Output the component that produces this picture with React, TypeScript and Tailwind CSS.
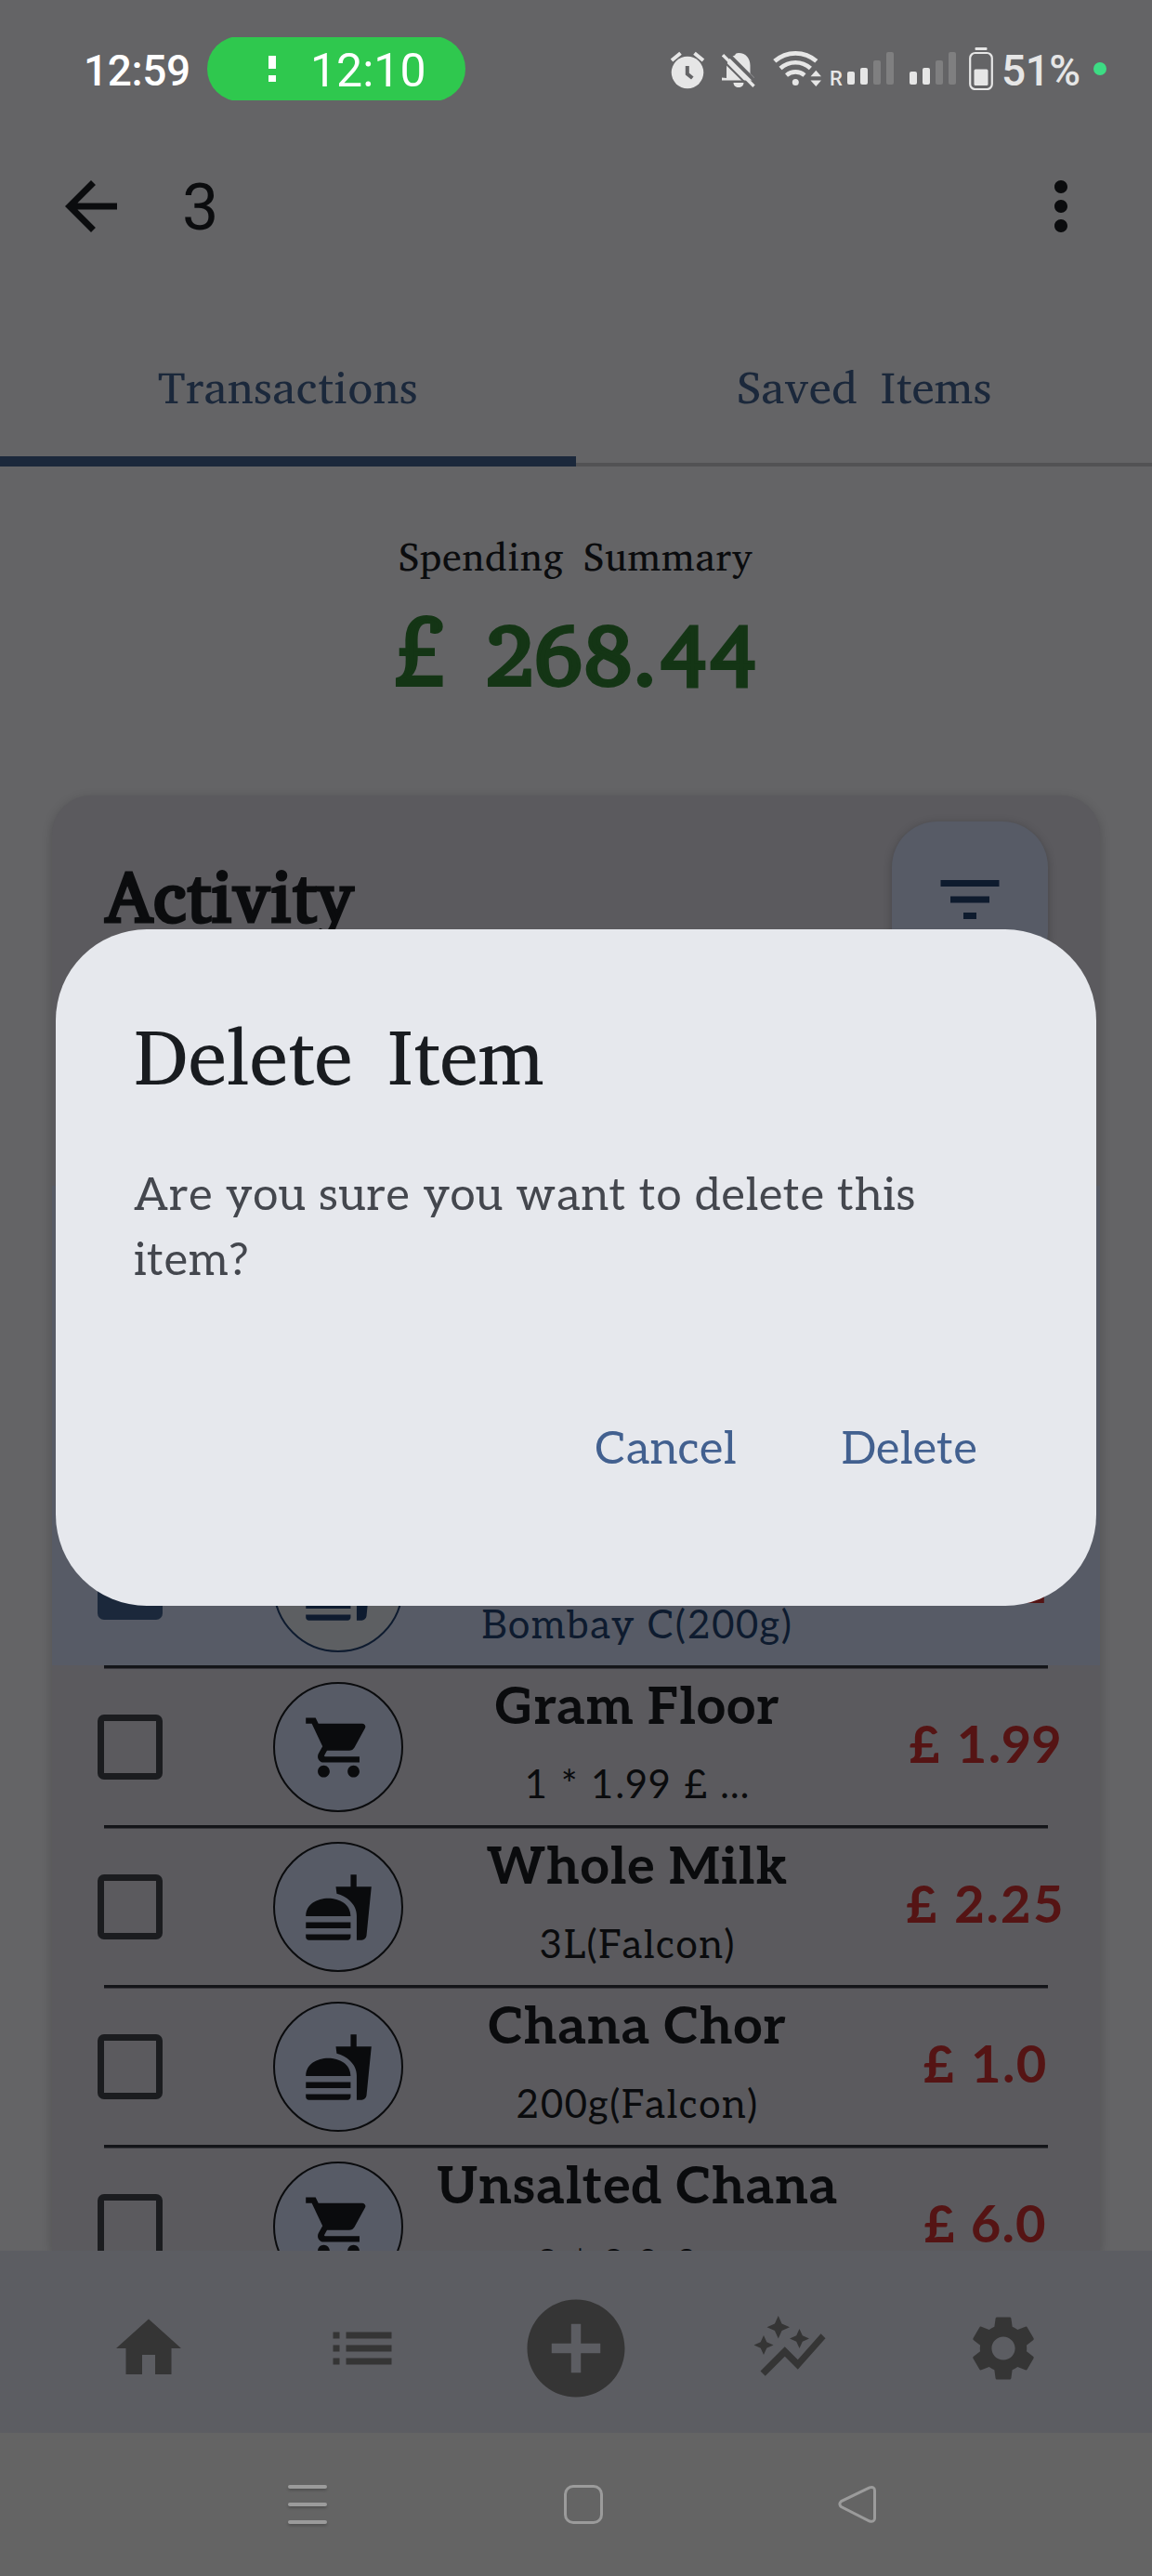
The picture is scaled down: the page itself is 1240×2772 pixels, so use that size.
import type { ReactNode } from 'react';
import {
  MdAddCircle,
  MdArrowBack,
  MdAutoGraph,
  MdFastfood,
  MdFilterList,
  MdHome,
  MdList,
  MdMoreVert,
  MdSettings,
  MdShoppingCart,
} from 'react-icons/md';

const serif = "font-['Charis_SIL','Noto_Serif','DejaVu_Serif',serif]";
const slab = "font-['Aleo','Lato','DejaVu_Serif',serif]";

function AlarmIcon() {
  return (
    <svg className="h-[41px] w-[38px]" viewBox="0 0 38 41" fill="none">
      <circle cx="19" cy="23" r="17.3" fill="#e6e6e6" />
      <path d="M2 10 L11.5 2.2 M36 10 L26.5 2.2" stroke="#e6e6e6" strokeWidth="4" />
      <path d="M18.8 16 v8.5 l5.5 4.5" stroke="#646466" strokeWidth="4" />
    </svg>
  );
}

function BellOffIcon() {
  return (
    <svg className="h-[37px] w-[36px]" viewBox="0 0 36 37">
      <path
        d="M5 27 V17 C5 9 9 4 14 2.600 C14.500 .8 16.200 0 18 0 C26 0 30.500 6 30.500 13.500 V22 L35 26.500 V29.500 H0 V26.500 Z M12.500 32 H23.500 C23.500 35 21 37 18 37 C15 37 12.500 35 12.500 32 Z"
        fill="#e6e6e6"
      />
      <path d="M4 -1.500 L38 32.500" stroke="#646466" strokeWidth="4" />
      <path d="M1 2.200 L34.500 35.700" stroke="#e6e6e6" strokeWidth="3.400" />
      <path d="M-2 5 L31 38" stroke="#646466" strokeWidth="2" />
    </svg>
  );
}

function WifiIcon() {
  return (
    <svg className="h-[40px] w-[53px]" viewBox="0 0 53 40" fill="none" stroke="#e6e6e6">
      <path d="M1.800 12.800 A34 34 0 0 1 46.800 12.800" strokeWidth="4.800" />
      <path d="M8 20.500 A24 24 0 0 1 40.400 20.500" strokeWidth="4.600" />
      <path d="M14.500 28 A15 15 0 0 1 34 28" strokeWidth="4.600" />
      <circle cx="24.300" cy="35.500" r="3.500" fill="#e6e6e6" stroke="none" />
      <path d="M40.500 29.300 L46.300 22.800 L52 29.300 Z M40.500 33.500 H52 L46.300 40 Z" fill="#e6e6e6" stroke="none" />
    </svg>
  );
}

function SignalBars() {
  return (
    <div className="flex h-[35px] items-end gap-[6px]">
      <div className="h-[14px] w-2 rounded-[2px] bg-[#e6e6e6]" />
      <div className="h-[18px] w-2 rounded-[2px] bg-[#e6e6e6]" />
      <div className="h-[26px] w-2 rounded-[2px] bg-[#7f7f80]" />
      <div className="h-[35px] w-2 rounded-[2px] bg-[#7f7f80]" />
    </div>
  );
}

function BatteryIcon() {
  return (
    <svg className="h-[46px] w-[26px]" viewBox="0 0 26 46">
      <rect x="6.500" y="0" width="13" height="3" rx="1" fill="#e6e6e6" />
      <rect x="1.200" y="6" width="23.600" height="39" rx="5.500" fill="none" stroke="#e6e6e6" strokeWidth="2.200" />
      <rect x="5.500" y="23.500" width="15" height="17.500" rx="1.500" fill="#e6e6e6" />
    </svg>
  );
}

function StatusBar() {
  return (
    <header className="flex h-[148px] shrink-0 items-start pt-10 font-['Roboto',sans-serif]">
      <div className="ml-[90px] mt-[12px] w-[133px] text-[46px]/[48px] font-medium tracking-[-0.4px] text-white">
        12:59
      </div>
      <div className="h-[68px] w-[278px] overflow-hidden">
        <div className="-mt-px flex h-[70px] items-center rounded-full bg-[#2fc84e]">
          <div className="ml-[66px] flex flex-col gap-[7px]">
            <div className="h-[14px] w-2 bg-white" />
            <div className="h-[7px] w-2 bg-white" />
          </div>
          <span className="ml-[37px] mt-[3px] text-[50px]/[56px] text-white">12:10</span>
        </div>
      </div>
      <div className="ml-[220px] mt-[11px] flex h-[46px] items-start">
        <div className="mt-1">
          <AlarmIcon />
        </div>
        <div className="ml-[18px] mt-[6px]">
          <BellOffIcon />
        </div>
        <div className="ml-[19px] mt-[2px]">
          <WifiIcon />
        </div>
        <span className="ml-[8px] mt-[22px] w-[19px] text-[22px]/[24px] font-medium text-[#e6e6e6]">R</span>
        <div className="mt-[5px]">
          <SignalBars />
        </div>
        <div className="ml-[17px] mt-[5px]">
          <SignalBars />
        </div>
        <div className="ml-[14px]">
          <BatteryIcon />
        </div>
        <span className="ml-[9px] mt-px w-[99px] text-[46px]/[48px] font-medium tracking-[-0.5px] text-[#e6e6e6]">
          51%
        </span>
        <div className="mt-4 size-[14px] rounded-full bg-[#3ddc84]" />
      </div>
    </header>
  );
}

function AppBar() {
  return (
    <div className="flex h-[148px] shrink-0 items-center text-[#0b0c0e]">
      <MdArrowBack className="ml-14 size-[84px]" />
      <span className="ml-[56px] mt-[2px] font-['Roboto',sans-serif] text-[70px]/[84px]">3</span>
      <MdMoreVert className="ml-auto mr-14 size-[84px]" />
    </div>
  );
}

function Tabs() {
  return (
    <nav className={`flex h-[206px] shrink-0 text-[49px]/[70px] text-[#1b283b] ${serif}`}>
      <div className="flex flex-1 flex-col items-center border-b-[11px] border-[#1b283b] pt-[85px]">
        <span className="tracking-[0.5px]">Transactions</span>
      </div>
      <div className="flex flex-1 flex-col items-center border-b-[4px] border-[#525254] pt-[85px]">
        <span className="pl-px tracking-[0.35px] [word-spacing:10px]">Saved Items</span>
      </div>
    </nav>
  );
}

function Summary() {
  return (
    <section className={`flex h-[314px] shrink-0 flex-col items-center pt-[68px] ${serif}`}>
      <span className="text-[42px]/[56px] tracking-[0.75px] text-[#0b0c0e] [word-spacing:8px]">Spending Summary</span>
      <span className="mt-[18px] text-[98px]/[112px] text-[#143515] [-webkit-text-stroke:4px_#143515] [word-spacing:15px]">
        £ <span className="text-[91px]/[100px] tracking-[2px]">268.44</span>
      </span>
    </section>
  );
}

type Item = { title: string; detail: string; price: string; icon: 'food' | 'cart'; selected?: boolean };

const items: Item[] = [
  { title: '', detail: 'Bombay C(200g)', price: '£ 1.2', icon: 'food', selected: true },
  { title: 'Gram Floor', detail: '1 * 1.99 £ ...', price: '£ 1.99', icon: 'cart' },
  { title: 'Whole Milk', detail: '3L(Falcon)', price: '£ 2.25', icon: 'food' },
  { title: 'Chana Chor', detail: '200g(Falcon)', price: '£ 1.0', icon: 'food' },
  { title: 'Unsalted Chana', detail: '2 * 3.0 £ ...', price: '£ 6.0', icon: 'cart' },
];

function ItemRow({ item }: { item: Item }) {
  const Icon = item.icon === 'food' ? MdFastfood : MdShoppingCart;
  return (
    <div className={item.selected ? 'h-[172px] shrink-0 bg-[#575b66] text-[#0e1b2f]' : 'h-[172px] shrink-0 text-[#0a0b0d]'}>
      <div className="mx-14 h-1 border-b border-[#37363b] bg-[#141519]" />
      <div className="flex h-[168px] items-center pl-[49px]">
        <div
          className={
            item.selected
              ? 'size-[70px] rounded-[7px] bg-[#1b283b]'
              : 'size-[70px] rounded-[7px] border-[7px] border-[#1b1c1f]'
          }
        />
        <div
          className={
            item.selected
              ? 'ml-[119px] flex size-[140px] items-center justify-center rounded-full border-2 border-[#0e1b2f] bg-[#5d5f62]'
              : 'ml-[119px] flex size-[140px] items-center justify-center rounded-full border-2 border-[#0a0b0d] bg-[#575b66]'
          }
        >
          <Icon className="size-[77px]" />
        </div>
        <div className={`ml-[10px] flex h-[168px] w-[484px] flex-col items-center whitespace-nowrap ${slab}`}>
          <span className="h-[84px] text-[56px]/[84px] font-bold tracking-[0.7px]">{item.title}</span>
          <span className="text-[42px]/[84px] tracking-[1.6px]">{item.detail}</span>
        </div>
        <div className={`ml-[9px] w-[246px] whitespace-nowrap text-center text-[56px]/[84px] font-bold text-[#551414] ${slab}`}>
          <span className="tracking-[1.9px]">{item.price}</span>
        </div>
      </div>
    </div>
  );
}

function ActivityCard() {
  return (
    <section className="mx-14 flex min-h-0 flex-1 flex-col rounded-t-[42px] bg-[#5b5a5e] shadow-[0_3px_12px_rgba(0,0,0,0.2)]">
      <div className="flex h-[248px] shrink-0 justify-between px-14 pt-7">
        <h2 className={`pl-px pt-[23px] text-[77px]/[112px] text-[#0b0c0e] [-webkit-text-stroke:3px_#0b0c0e] ${serif}`}>
          Activity
        </h2>
        <button className="flex size-[168px] items-center justify-center rounded-[49px] bg-[#575b66] text-[#0e1b2e] shadow-[0_2px_10px_rgba(0,0,0,0.25)]">
          <MdFilterList className="size-[84px]" />
        </button>
      </div>
      <div className="h-[172px] shrink-0" />
      <div className="h-[344px] shrink-0 bg-[#575b66]" />
      {items.map((item) => (
        <ItemRow key={item.detail} item={item} />
      ))}
    </section>
  );
}

function NavSlot({ children }: { children: ReactNode }) {
  return <div className="flex w-[230px] items-center justify-center">{children}</div>;
}

function BottomNav() {
  return (
    <nav className="flex h-[196px] shrink-0 justify-center bg-[#5c5d62] pt-[14px] text-[#353535]">
      <NavSlot>
        <MdHome className="size-[84px]" />
      </NavSlot>
      <NavSlot>
        <MdList className="size-[84px]" />
      </NavSlot>
      <NavSlot>
        <MdAddCircle className="size-[126px]" />
      </NavSlot>
      <NavSlot>
        <MdAutoGraph className="size-[84px]" />
      </NavSlot>
      <NavSlot>
        <MdSettings className="size-[84px]" />
      </NavSlot>
    </nav>
  );
}

function SystemNav() {
  return (
    <footer className="flex h-[154px] shrink-0 items-start bg-[#646464] pt-14">
      <div className="ml-[310px] flex flex-col gap-[15px]">
        <div className="h-1 w-[42px] rounded-full bg-[#9b9b9b] shadow-[0_2px_3px_rgba(0,0,0,0.2)]" />
        <div className="h-1 w-[42px] rounded-full bg-[#9b9b9b] shadow-[0_2px_3px_rgba(0,0,0,0.2)]" />
        <div className="h-1 w-[42px] rounded-full bg-[#9b9b9b] shadow-[0_2px_3px_rgba(0,0,0,0.2)]" />
      </div>
      <div className="ml-[255px] size-[42px] rounded-[10px] border-[3px] border-[#9b9b9b]" />
      <svg className="ml-[253px] h-[42px] w-[42px]" viewBox="0 0 42 42" fill="none" stroke="#9b9b9b" strokeWidth="3">
        <path d="M34 2.900 L3.500 17.600 Q.2 20.500 3.500 23.600 L34 39 Q39.500 40 39.500 36 V6 Q39.500 1.500 34 2.900 Z" />
      </svg>
    </footer>
  );
}

function DeleteDialog() {
  return (
    <div
      role="dialog"
      className={`absolute left-[60px] top-[1000px] flex h-[728px] w-[1120px] flex-col rounded-[98px] bg-[#e6e8ed] px-[84px] pt-20 ${slab}`}
    >
      <h1 className={`self-start text-[84px]/[112px] text-[#191c20] [word-spacing:13px] ${serif}`}>Delete Item</h1>
      <p className="mt-[60px] text-[49px]/[70px] tracking-[0.79px] text-[#44474e]">
        Are you sure you want to delete this
        <br />
        item?
      </p>
      <div className="mt-[133px] flex justify-end gap-[113px] pr-[44px] text-[49px]/[70px] tracking-[0.35px] text-[#42608f]">
        <button>Cancel</button>
        <button>Delete</button>
      </div>
    </div>
  );
}

export default function App() {
  return (
    <main className="relative flex h-[2772px] w-[1240px] flex-col overflow-hidden bg-[#646466]">
      <StatusBar />
      <AppBar />
      <Tabs />
      <Summary />
      <div className="flex h-[1606px] shrink-0 flex-col overflow-hidden pt-10">
        <ActivityCard />
      </div>
      <BottomNav />
      <SystemNav />
      <DeleteDialog />
    </main>
  );
}
